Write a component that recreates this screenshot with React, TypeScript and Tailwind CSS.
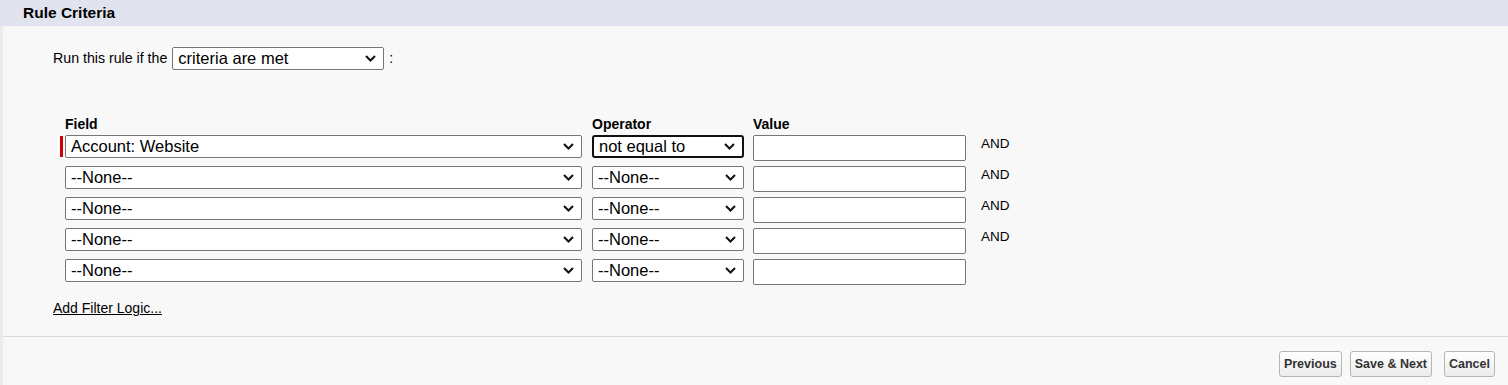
import React from "react";

const Chevron = () => (
  <svg width="11" height="7" viewBox="0 0 11 7" className="shrink-0">
    <path d="M1 1 L5.5 5.5 L10 1" fill="none" stroke="#111" strokeWidth="2" />
  </svg>
);

function Select({ value, width, focused }: { value: string; width: string; focused?: boolean }) {
  return (
    <div
      className={
        "flex h-[23px] items-center justify-between bg-white pl-[5px] pr-[7px] text-[16.5px] leading-none text-black " +
        width +
        (focused ? " rounded-[3px] border-2 border-[#101010] pl-[4px] pr-[6px]" : " rounded-[2px] border border-[#767676]")
      }
    >
      <span className="whitespace-nowrap">{value}</span>
      <Chevron />
    </div>
  );
}

const rows = [
  { field: "Account: Website", op: "not equal to", and: true, first: true },
  { field: "--None--", op: "--None--", and: true },
  { field: "--None--", op: "--None--", and: true },
  { field: "--None--", op: "--None--", and: true },
  { field: "--None--", op: "--None--", and: false },
];

export default function App() {
  return (
    <div
      className="flex h-[385px] w-full flex-col bg-[#f8f8f8] text-black"
      style={{ fontFamily: '"Liberation Sans", Arial, sans-serif' }}
    >
      <div className="flex h-[26px] shrink-0 items-center bg-[#e1e4ee] pl-[23px] text-[15.5px] font-bold">
        Rule Criteria
      </div>
      <div className="flex flex-1 flex-col border-l-[3px] border-[#ebebeb]">
        <div className="flex flex-col pl-[50px] pt-[21px]">
          <div className="flex items-center text-[14.2px]">
            <span>Run this rule if the</span>
            <div className="ml-[5px]">
              <Select value="criteria are met" width="w-[212px]" />
            </div>
            <span className="ml-[5px]">:</span>
          </div>

          <div className="ml-[7px] mt-[46px] flex flex-col">
            <div className="flex text-[14px] font-bold leading-[16px]">
              <span className="ml-[5px] w-[527px]">Field</span>
              <span className="w-[161px]">Operator</span>
              <span>Value</span>
            </div>
            <div className="mt-[3px] flex flex-col gap-[5px]">
              {rows.map((r, i) => (
                <div key={i} className="flex h-[26px] items-start">
                  <div className={"mt-[1px] h-[21px] w-[3px] " + (r.first ? "bg-[#c00]" : "")} />
                  <div className="ml-[2px]">
                    <Select value={r.field} width="w-[517px]" />
                  </div>
                  <div className="ml-[10px]">
                    <Select value={r.op} width="w-[152px]" focused={r.first} />
                  </div>
                  <div className="ml-[9px] h-[26px] w-[213px] rounded-[2px] border border-[#767676] bg-white" />
                  {r.and && <span className="ml-[15px] pt-[1px] text-[13.5px] leading-[16px]">AND</span>}
                </div>
              ))}
            </div>
          </div>

          <a href="#" className="mt-[15px] text-[14px] leading-[16px] text-black underline">
            Add Filter Logic...
          </a>
        </div>

        <div className="mt-auto flex h-[49px] items-start justify-end gap-[8px] border-t border-[#dcdcdc] pr-[13px] pt-[14px]">
          {["Previous", "Save & Next"].map((b) => (
            <button
              key={b}
              className="h-[26px] rounded-[3px] border border-[#b5b5b5] bg-gradient-to-b from-[#ffffff] to-[#ececec] px-[4px] text-[12.5px] font-bold text-[#333]"
            >
              {b}
            </button>
          ))}
          <button className="ml-[4px] h-[26px] rounded-[3px] border border-[#b5b5b5] bg-gradient-to-b from-[#ffffff] to-[#ececec] px-[4px] text-[12.5px] font-bold text-[#333]">
            Cancel
          </button>
        </div>
      </div>
    </div>
  );
}
